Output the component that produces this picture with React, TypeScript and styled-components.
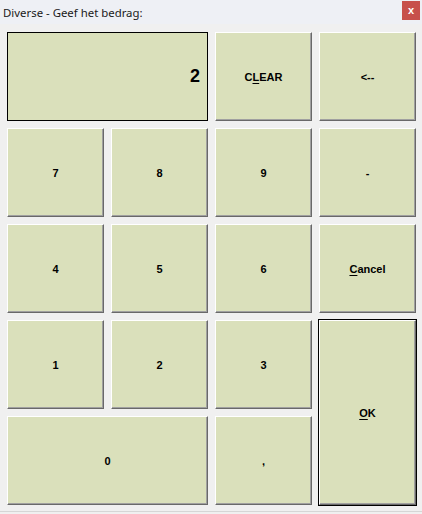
import React from "react"
import styled, { createGlobalStyle } from "styled-components"

const GlobalStyle = createGlobalStyle`
  html, body {
    margin: 0;
    padding: 0;
    background: #f0f0f0;
  }
`

const Window = styled.div`
  width: 422px;
  height: 512px;
  box-sizing: border-box;
  background: #f0f0f0;
  border-bottom: 1px solid #d6d6d6;
  display: flex;
  flex-direction: column;
`

const TitleBar = styled.div`
  height: 24px;
  display: flex;
  align-items: center;
  justify-content: space-between;
  padding-left: 3px;
  background: #eef0f5;
  font-family: "Noto Sans", "Open Sans", sans-serif;
  font-size: 11.4px;
  color: #1a1a1a;
`

const CloseButton = styled.div`
  width: 18px;
  height: 19px;
  margin: -4px 2px 0 0;
  background: #c7504b;
  color: #fff;
  font-family: "Liberation Sans", sans-serif;
  font-weight: bold;
  font-size: 11px;
  display: flex;
  align-items: center;
  justify-content: center;
`

const Pad = styled.div`
  display: grid;
  grid-template-columns: repeat(4, 97px);
  grid-template-rows: repeat(5, 89px);
  gap: 7px;
  padding: 8px 0 0 7px;
`

const Display = styled.div`
  grid-column: span 2;
  box-sizing: border-box;
  background: #dae0bb;
  border: 1px solid #000;
  display: flex;
  align-items: center;
  justify-content: flex-end;
  padding-right: 7px;
  font-family: "Liberation Sans", sans-serif;
  font-weight: bold;
  font-size: 18px;
  color: #000;
`

const Key = styled.div<{ $cols?: number; $rows?: number; $default?: boolean }>`
  grid-column: span ${(p) => p.$cols || 1};
  grid-row: span ${(p) => p.$rows || 1};
  box-sizing: border-box;
  background: #dae0bb;
  border: 1px solid;
  border-color: #fff #696969 #696969 #fff;
  box-shadow: inset -1px -1px 0 #a0a0a0;
  outline: ${(p) => (p.$default ? "1px solid #000" : "none")};
  display: flex;
  align-items: center;
  justify-content: center;
  font-family: "Liberation Sans", sans-serif;
  font-weight: bold;
  font-size: 11px;
  color: #000;

  u {
    text-decoration-thickness: 1px;
    text-underline-offset: 2px;
  }
`

export default function App() {
  return (
    <>
      <GlobalStyle />
      <Window>
        <TitleBar>
          <span>Diverse - Geef het bedrag:</span>
          <CloseButton>x</CloseButton>
        </TitleBar>
        <Pad>
          <Display>2</Display>
          <Key>
            C<u>L</u>EAR
          </Key>
          <Key>&lt;--</Key>
          <Key>7</Key>
          <Key>8</Key>
          <Key>9</Key>
          <Key>-</Key>
          <Key>4</Key>
          <Key>5</Key>
          <Key>6</Key>
          <Key>
            <u>C</u>ancel
          </Key>
          <Key>1</Key>
          <Key>2</Key>
          <Key>3</Key>
          <Key $rows={2} $default>
            <u>O</u>K
          </Key>
          <Key $cols={2}>0</Key>
          <Key>,</Key>
        </Pad>
      </Window>
    </>
  )
}
